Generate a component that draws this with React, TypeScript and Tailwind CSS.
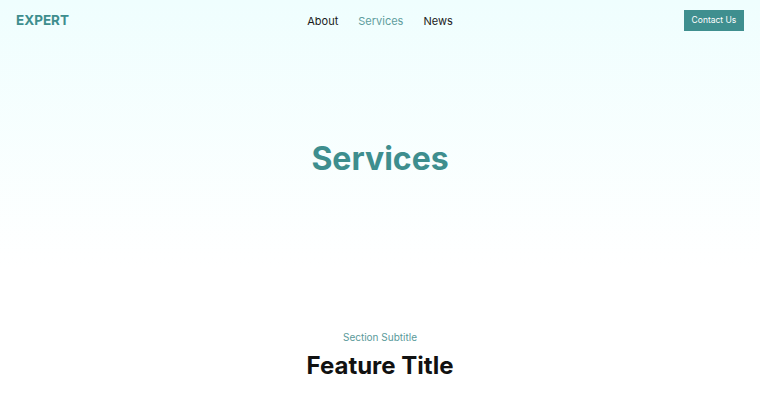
import React from 'react';

const navLinks = [
  { label: 'About', active: false },
  { label: 'Services', active: true },
  { label: 'News', active: false },
];

export default function App() {
  return (
    <div className="min-h-screen bg-white font-['Inter',sans-serif] text-[#111]">
      {/* Hero */}
      <section className="h-[270px] bg-gradient-to-b from-[#effefe] to-white flex flex-col">
        <header className="flex items-center justify-between h-[40px] px-4">
          <div className="w-[120px] text-[13.5px] font-bold text-[#3e8e8e]">EXPERT</div>
          <nav className="flex items-center gap-[20px] text-[11px] leading-[16px] pt-[1px]">
            {navLinks.map((l) => (
              <a key={l.label} href="#" className={l.active ? 'text-[#5f9d9d]' : 'text-[#1a1a1a]'}>
                {l.label}
              </a>
            ))}
          </nav>
          <div className="w-[120px] flex justify-end">
            <button className="h-[21px] w-[60px] bg-[#3f8f8f] text-white text-[8.5px]">Contact Us</button>
          </div>
        </header>
        <div className="flex justify-center pt-[103px]">
          <h1 className="text-[32px] leading-none font-bold text-[#3e8e8e]">Services</h1>
        </div>
      </section>

      {/* Feature */}
      <section className="flex flex-col items-center pt-[60px]">
        <p className="text-[10px] leading-[14px] text-[#5a9a9a]">Section Subtitle</p>
        <h2 className="mt-[10px] text-[24px] leading-none font-bold text-[#111]">Feature Title</h2>
      </section>
    </div>
  );
}
